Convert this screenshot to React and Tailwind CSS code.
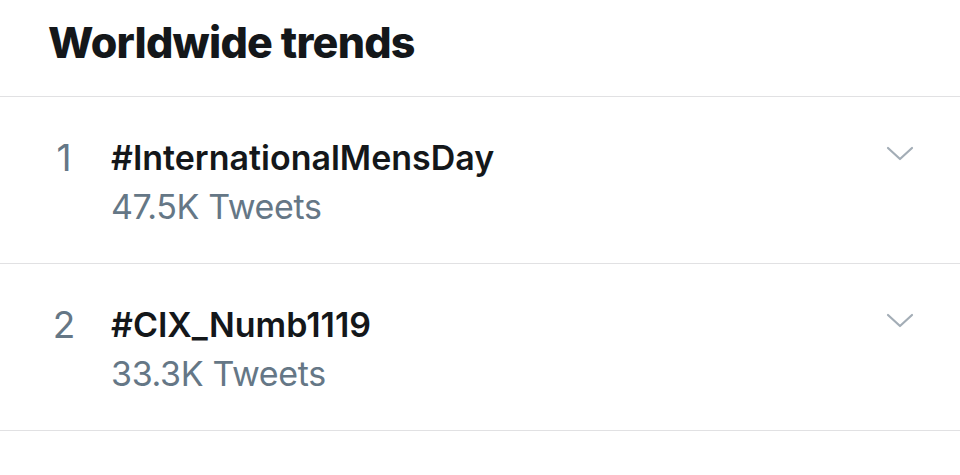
import React from "react";

const trends = [
  { rank: "1", tag: "#InternationalMensDay", count: "47.5K Tweets" },
  { rank: "2", tag: "#CIX_Numb1119", count: "33.3K Tweets" },
];

function Chevron() {
  return (
    <svg width="28" height="16" viewBox="0 0 28 16" className="mt-[13px]" fill="none">
      <polyline
        points="2,2 14,13 26,2"
        stroke="#a3adb6"
        strokeWidth="2.2"
        strokeLinecap="round"
        strokeLinejoin="round"
      />
    </svg>
  );
}

export default function App() {
  return (
    <div className="w-[960px] h-[475px] bg-white overflow-hidden font-['Inter','Liberation_Sans',sans-serif]">
      <div className="h-[97px] pl-[48px] pt-[16px] border-b border-[#e1e1e3]">
        <h1 className="text-[43px] leading-[52px] font-extrabold text-[#14171a] tracking-[-0.75px]">
          Worldwide trends
        </h1>
      </div>
      {trends.map((t) => (
        <div
          key={t.rank}
          className="flex items-start h-[167px] pt-[36px] border-b border-[#e1e1e3]"
        >
          <div className="w-[40px] ml-[44px] mr-[28px] text-center text-[37px] leading-[49px] text-[#657786] font-normal">
            {t.rank}
          </div>
          <div className="flex-1 -ml-[1px]">
            <div className="text-[34px] leading-[49px] font-semibold text-[#14171a]">
              {t.tag}
            </div>
            <div className="text-[34px] leading-[49px] font-normal text-[#657786] tracking-[-0.35px]">
              {t.count}
            </div>
          </div>
          <div className="mr-[46px]">
            <Chevron />
          </div>
        </div>
      ))}
    </div>
  );
}
